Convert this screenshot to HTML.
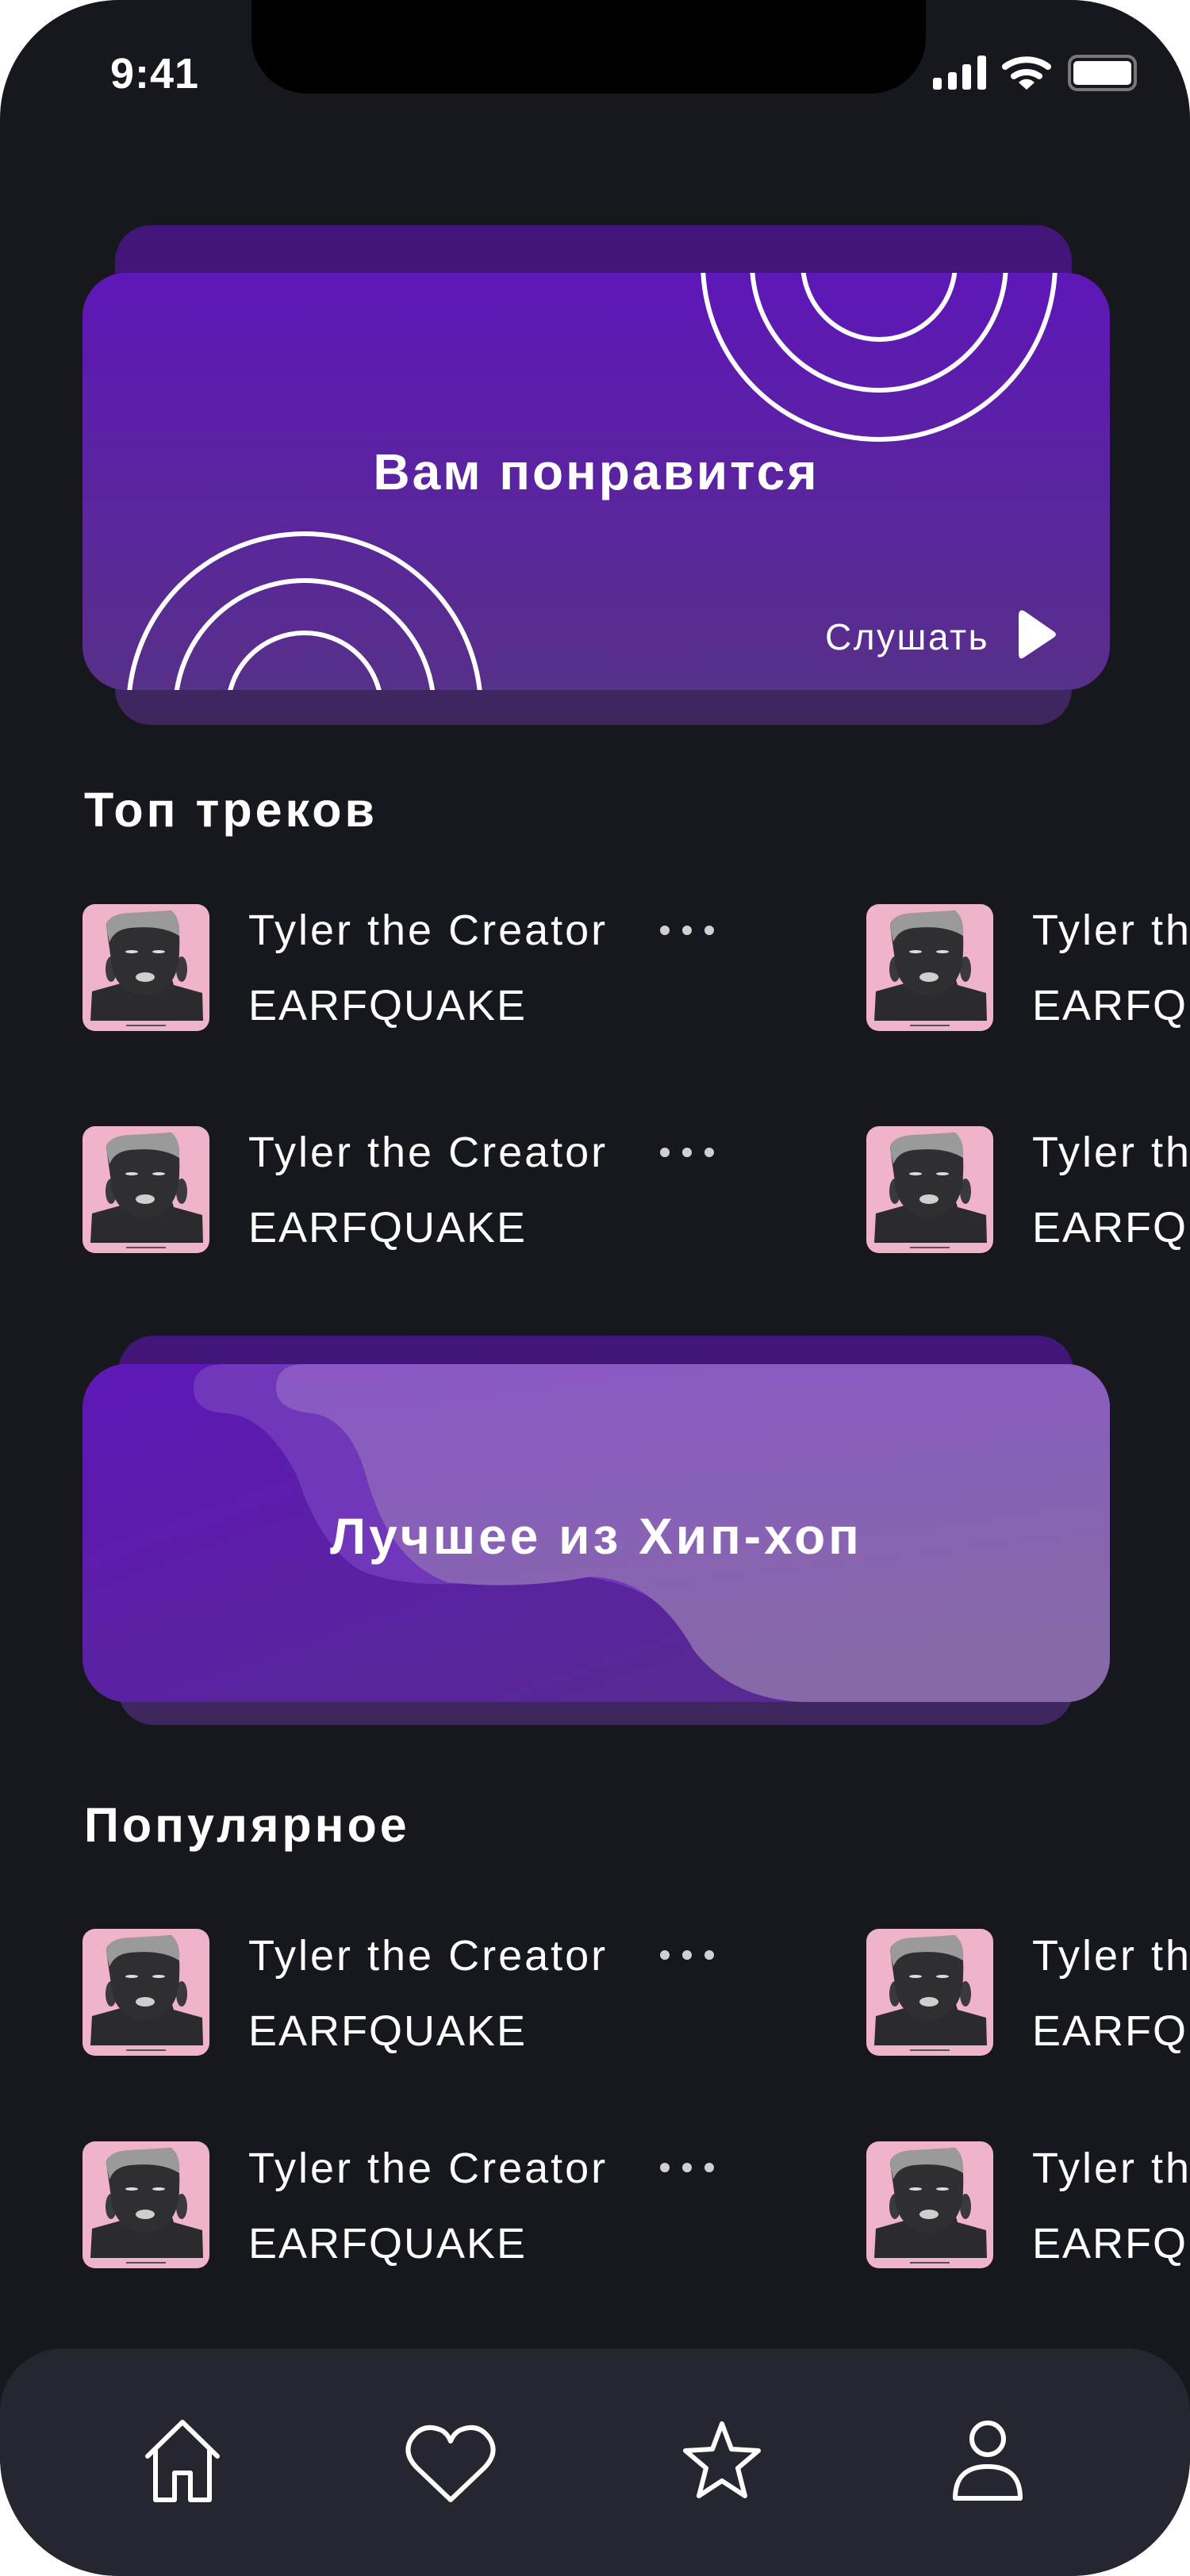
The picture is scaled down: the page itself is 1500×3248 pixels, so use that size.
<!DOCTYPE html>
<html><head><meta charset="utf-8">
<style>
*{margin:0;padding:0;box-sizing:border-box}
html,body{width:1500px;height:3248px;background:#fff;overflow:hidden}
.phone{position:absolute;left:0;top:0;width:1500px;height:3248px;background:#17181d;border-radius:150px;overflow:hidden;font-family:"Liberation Sans",sans-serif;color:#fff}
.abs{position:absolute}
.h{font-weight:bold;font-size:61px;letter-spacing:4px;white-space:nowrap}
.t1,.t2{position:absolute;font-size:54px;white-space:nowrap;font-weight:normal;line-height:1}
.t1{letter-spacing:3px}
.t2{letter-spacing:2px}
.dots{position:absolute;width:70px;height:12px}
.dots i{position:absolute;top:0;width:12px;height:12px;border-radius:50%;background:#d0d0d0}
</style></head><body>
<div class="phone">
<svg width="0" height="0" style="position:absolute">
 <defs>
  <symbol id="art" viewBox="0 0 160 160">
   <rect width="160" height="160" rx="16" fill="#efb4c9"/>
   <path d="M10 147 L12 110 L48 100 L52 92 L112 92 L115 102 L151 112 L152 147 Z" fill="#2b2b2e"/>
   <ellipse cx="36" cy="82" rx="7" ry="16" fill="#3a3a3d"/>
   <ellipse cx="125" cy="82" rx="7" ry="16" fill="#3a3a3d"/>
   <path d="M30 28 Q30 14 60 12 L112 8 Q124 20 122 60 Q122 108 80 116 Q38 110 36 70 Z" fill="#2f2f32"/>
   <path d="M30 30 Q30 12 60 11 L112 8 Q124 18 122 40 Q100 26 60 30 Q40 32 34 48 Z" fill="#9a9a9a"/>
   <ellipse cx="62" cy="60" rx="8" ry="2" fill="#ddd"/>
   <ellipse cx="96" cy="60" rx="8" ry="2" fill="#ddd"/>
   <ellipse cx="79" cy="92" rx="12" ry="6" fill="#cfcfcf"/>
   <rect x="55" y="152" width="50" height="2" fill="#555"/>
  </symbol>
 </defs>
</svg>

<div class="abs" style="left:317px;top:-40px;width:850px;height:158px;background:#000;border-radius:0 0 70px 70px"></div>
<div class="abs" style="left:139px;top:62px;font-size:54px;font-weight:bold;letter-spacing:1px">9:41</div>
<svg class="abs" style="left:1170px;top:64px" width="270" height="56" viewBox="1170 64 270 56">
 <rect x="1176" y="98" width="11" height="15" rx="3" fill="#fff"/>
 <rect x="1195" y="91" width="11" height="22" rx="3" fill="#fff"/>
 <rect x="1213" y="81" width="11" height="32" rx="3" fill="#fff"/>
 <rect x="1232" y="70" width="11" height="43" rx="3" fill="#fff"/>
 <path d="M1267 84 A46 46 0 0 1 1321 84" stroke="#fff" stroke-width="8" fill="none" stroke-linecap="round"/>
 <path d="M1278 96 A28 28 0 0 1 1310 96" stroke="#fff" stroke-width="8" fill="none" stroke-linecap="round"/>
 <path d="M1284 104 L1294 113 L1304 104 A14 14 0 0 0 1284 104 Z" fill="#fff"/>
 <rect x="1348" y="71" width="83" height="42" rx="10" stroke="#777" stroke-width="4" fill="none"/>
 <rect x="1353" y="77" width="73" height="30" rx="5" fill="#fff"/>
</svg>

<div class="abs" style="left:145px;top:284px;width:1206px;height:630px;border-radius:45px;background:linear-gradient(#42157a,#3e275e)"></div>
<div class="abs" style="left:104px;top:344px;width:1295px;height:526px;border-radius:55px;background:linear-gradient(#5e17b8,#573089);overflow:hidden">
 <svg class="abs" style="left:0;top:0" width="1295" height="526">
  <g fill="none" stroke="#fff" stroke-width="6">
   <circle cx="1004" cy="-12" r="222"/>
   <circle cx="1004" cy="-12" r="160"/>
   <circle cx="1004" cy="-12" r="96"/>
   <circle cx="280" cy="551" r="222"/>
   <circle cx="280" cy="551" r="163"/>
   <circle cx="280" cy="551" r="97"/>
  </g>
  <path d="M1180 433 L1180 480 Q1180 490 1188 484 L1224 460 Q1230 456 1224 452 L1188 427 Q1180 422 1180 433 Z" fill="#fff"/>
 </svg>
 <div class="abs" style="left:0;width:1295px;top:214px;text-align:center;font-size:64px;letter-spacing:3px;font-weight:bold">Вам понравится</div>
 <div class="abs" style="left:936px;top:432px;font-size:46px;letter-spacing:2.5px">Слушать</div>
</div>

<div class="abs h" style="left:106px;top:986px">Топ треков</div>

<svg class="abs" style="left:104px;top:1140px" width="160" height="160"><use href="#art"/></svg>
<svg class="abs" style="left:1092px;top:1140px" width="160" height="160"><use href="#art"/></svg>
<div class="t1" style="left:313px;top:1146px">Tyler the Creator</div>
<div class="t2" style="left:313px;top:1241px">EARFQUAKE</div>
<div class="t1" style="left:1301px;top:1146px">Tyler the Creator</div>
<div class="t2" style="left:1301px;top:1241px">EARFQUAKE</div>
<div class="dots" style="left:832px;top:1167px"><i style="left:0"></i><i style="left:28px"></i><i style="left:56px"></i></div>

<svg class="abs" style="left:104px;top:1420px" width="160" height="160"><use href="#art"/></svg>
<svg class="abs" style="left:1092px;top:1420px" width="160" height="160"><use href="#art"/></svg>
<div class="t1" style="left:313px;top:1426px">Tyler the Creator</div>
<div class="t2" style="left:313px;top:1521px">EARFQUAKE</div>
<div class="t1" style="left:1301px;top:1426px">Tyler the Creator</div>
<div class="t2" style="left:1301px;top:1521px">EARFQUAKE</div>
<div class="dots" style="left:832px;top:1447px"><i style="left:0"></i><i style="left:28px"></i><i style="left:56px"></i></div>

<div class="abs" style="left:149px;top:1684px;width:1204px;height:491px;border-radius:45px;background:linear-gradient(#42157a,#3e275e)"></div>
<div class="abs" style="left:104px;top:1720px;width:1295px;height:426px;border-radius:55px;background:linear-gradient(160deg,#5e17b8,#562e89);overflow:hidden">
 <svg class="abs" style="left:0;top:0" width="1295" height="426">
  <defs><linearGradient id="g2" x1="0" y1="0" x2="0.3" y2="1"><stop offset="0" stop-color="#8a58c6"/><stop offset="1" stop-color="#8769a8"/></linearGradient></defs>
  <path d="M180 0 Q140 0 140 30 Q140 60 180 62 Q230 64 270 140 Q300 230 350 260 Q420 290 560 268 Q690 255 760 330 Q800 420 900 426 L1295 426 L1295 0 Z" fill="#7037ba"/>
  <path d="M280 0 Q244 0 244 30 Q244 58 290 62 Q340 70 360 150 Q390 250 460 275 Q550 285 640 268 Q720 270 770 360 Q820 426 920 426 L1295 426 L1295 0 Z" fill="url(#g2)"/>
 </svg>
 <div class="abs" style="left:0;width:1295px;top:180px;text-align:center;font-size:64px;letter-spacing:4px;font-weight:bold">Лучшее из Хип-хоп</div>
</div>

<div class="abs h" style="left:106px;top:2266px">Популярное</div>

<svg class="abs" style="left:104px;top:2432px" width="160" height="160"><use href="#art"/></svg>
<svg class="abs" style="left:1092px;top:2432px" width="160" height="160"><use href="#art"/></svg>
<div class="t1" style="left:313px;top:2439px">Tyler the Creator</div>
<div class="t2" style="left:313px;top:2534px">EARFQUAKE</div>
<div class="t1" style="left:1301px;top:2439px">Tyler the Creator</div>
<div class="t2" style="left:1301px;top:2534px">EARFQUAKE</div>
<div class="dots" style="left:832px;top:2459px"><i style="left:0"></i><i style="left:28px"></i><i style="left:56px"></i></div>

<svg class="abs" style="left:104px;top:2700px" width="160" height="160"><use href="#art"/></svg>
<svg class="abs" style="left:1092px;top:2700px" width="160" height="160"><use href="#art"/></svg>
<div class="t1" style="left:313px;top:2707px">Tyler the Creator</div>
<div class="t2" style="left:313px;top:2802px">EARFQUAKE</div>
<div class="t1" style="left:1301px;top:2707px">Tyler the Creator</div>
<div class="t2" style="left:1301px;top:2802px">EARFQUAKE</div>
<div class="dots" style="left:832px;top:2727px"><i style="left:0"></i><i style="left:28px"></i><i style="left:56px"></i></div>

<div class="abs" style="left:0;top:2961px;width:1500px;height:287px;background:#262630;border-radius:80px 80px 0 0"></div>
<svg class="abs" style="left:0;top:3040px" width="1500" height="130" viewBox="0 3040 1500 130">
 <g fill="none" stroke="#fff" stroke-width="6" stroke-linejoin="round" stroke-linecap="round">
  <path d="M186 3097 L230 3054 L274 3097 M196 3088 L196 3152 L220 3152 L220 3118 L240 3118 L240 3152 L264 3152 L264 3088"/>
  <path d="M568 3152 L526 3112 Q508 3094 518 3076 Q532 3054 556 3064 Q564 3068 568 3078 Q572 3068 580 3064 Q604 3054 618 3076 Q628 3094 610 3112 Z"/>
  <path d="M910 3056 L922 3088 L956 3090 L930 3112 L939 3147 L910 3128 L881 3147 L890 3112 L864 3090 L898 3088 Z"/>
  <circle cx="1245" cy="3075" r="20"/>
  <path d="M1204 3150 Q1204 3110 1245 3110 Q1286 3110 1286 3150 Z"/>
 </g>
</svg>
</div>
</body></html>
